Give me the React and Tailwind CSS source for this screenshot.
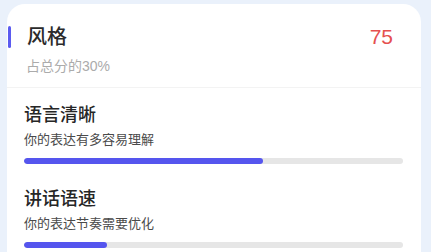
import React from 'react';

const items = [
  { title: '语言清晰', desc: '你的表达有多容易理解', value: 63 },
  { title: '讲话语速', desc: '你的表达节奏需要优化', value: 22 },
];

const ScoreItem = ({ title, desc, value }) => (
  <div className="pt-[15px] pb-[8px]">
    <div className="text-[18px] leading-[25px] font-medium text-[#262626]">{title}</div>
    <div className="mt-[3px] text-[13px] leading-[18px] text-[#4a4a4a]">{desc}</div>
    <div className="mt-[9px] h-[6px] w-full rounded-full bg-[#e6e6e6] overflow-hidden">
      <div className="h-full rounded-full bg-[#5555ee]" style={{ width: `${value}%` }} />
    </div>
  </div>
);

export default function App() {
  return (
    <div
      className="w-[431px] h-[252px] overflow-hidden bg-[#eaf1fb] pt-[4px] pl-[7px]"
      style={{ fontFamily: '"Liberation Sans", "Noto Sans CJK SC", sans-serif' }}
    >
      <div className="w-[414px] h-[260px] rounded-t-[18px] bg-white">
        {/* header */}
        <div className="pt-[19px] pb-[11px] border-b border-[#f3f3f3]">
          <div className="flex items-center pl-px pr-[28px]">
            <div className="w-[3px] h-[22px] rounded-full bg-[#5b5bf0]" />
            <div className="ml-4 text-[20px] leading-[28px] font-medium text-[#2b2b2b]">风格</div>
            <div className="ml-auto text-[21px] leading-[28px] text-[#e5504f]">75</div>
          </div>
          <div className="mt-[5px] pl-[19px] text-[14px] leading-[20px] text-[#ababab]">占总分的30%</div>
        </div>

        {/* items */}
        <div className="pl-[17px] pr-[18px]">
          {items.map((it) => (
            <ScoreItem key={it.title} {...it} />
          ))}
        </div>
      </div>
    </div>
  );
}
